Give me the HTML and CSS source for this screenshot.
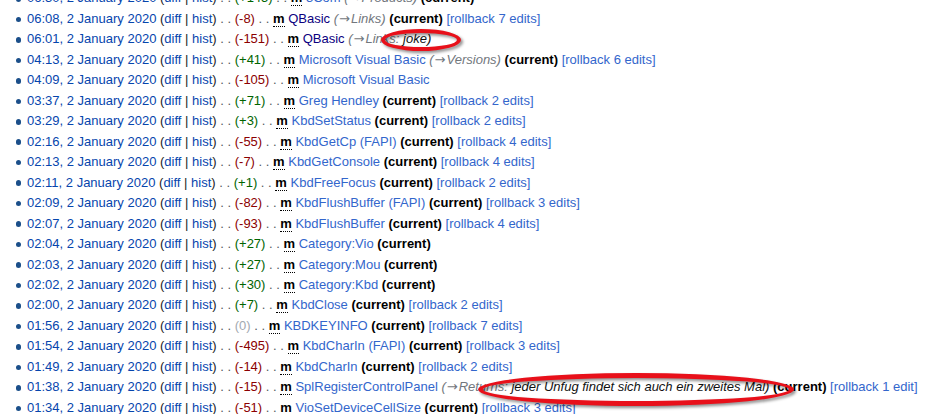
FILE: index.html
```html
<!DOCTYPE html>
<html lang="en">
<head>
    <meta charset="UTF-8">
    <meta name="viewport" content="width=device-width, initial-scale=1.0">
    <title>User contributions</title>

    <link rel="stylesheet" href="styles.css">
</head>
<body>
    <ul class="contribs">
        <li><a class="date" href="#">06:30, 2 January 2020</a> (<a href="#">diff</a> | <a href="#">hist</a>) <span class="sep">. .</span> <span class="size plus">(+145)</span> <span class="sep">. .</span> <abbr class="minor" title="minor edit">m</abbr> <a class="page" href="#">3Com</a> <span class="comment">(<span class="arrow">→</span>Products)</span> <b>(current)</b></li>
        <li><a class="date" href="#">06:08, 2 January 2020</a> (<a href="#">diff</a> | <a href="#">hist</a>) <span class="sep">. .</span> <span class="size minus">(-8)</span> <span class="sep">. .</span> <abbr class="minor" title="minor edit">m</abbr> <a class="page visited" href="#">QBasic</a> <span class="comment">(<span class="arrow">→</span>Links)</span> <b>(current)</b> <span class="rollback">[rollback 7 edits]</span></li>
        <li><a class="date" href="#">06:01, 2 January 2020</a> (<a href="#">diff</a> | <a href="#">hist</a>) <span class="sep">. .</span> <span class="size minus">(-151)</span> <span class="sep">. .</span> <abbr class="minor" title="minor edit">m</abbr> <a class="page visited" href="#">QBasic</a> <span class="comment">(<span class="arrow">→</span>Links: <span class="marked">joke)</span></span></li>
        <li><a class="date" href="#">04:13, 2 January 2020</a> (<a href="#">diff</a> | <a href="#">hist</a>) <span class="sep">. .</span> <span class="size plus">(+41)</span> <span class="sep">. .</span> <abbr class="minor" title="minor edit">m</abbr> <a class="page" href="#">Microsoft Visual Basic</a> <span class="comment">(<span class="arrow">→</span>Versions)</span> <b>(current)</b> <span class="rollback">[rollback 6 edits]</span></li>
        <li><a class="date" href="#">04:09, 2 January 2020</a> (<a href="#">diff</a> | <a href="#">hist</a>) <span class="sep">. .</span> <span class="size minus">(-105)</span> <span class="sep">. .</span> <abbr class="minor" title="minor edit">m</abbr> <a class="page" href="#">Microsoft Visual Basic</a></li>
        <li><a class="date" href="#">03:37, 2 January 2020</a> (<a href="#">diff</a> | <a href="#">hist</a>) <span class="sep">. .</span> <span class="size plus">(+71)</span> <span class="sep">. .</span> <abbr class="minor" title="minor edit">m</abbr> <a class="page" href="#">Greg Hendley</a> <b>(current)</b> <span class="rollback">[rollback 2 edits]</span></li>
        <li><a class="date" href="#">03:29, 2 January 2020</a> (<a href="#">diff</a> | <a href="#">hist</a>) <span class="sep">. .</span> <span class="size plus">(+3)</span> <span class="sep">. .</span> <abbr class="minor" title="minor edit">m</abbr> <a class="page" href="#">KbdSetStatus</a> <b>(current)</b> <span class="rollback">[rollback 2 edits]</span></li>
        <li><a class="date" href="#">02:16, 2 January 2020</a> (<a href="#">diff</a> | <a href="#">hist</a>) <span class="sep">. .</span> <span class="size minus">(-55)</span> <span class="sep">. .</span> <abbr class="minor" title="minor edit">m</abbr> <a class="page" href="#">KbdGetCp (FAPI)</a> <b>(current)</b> <span class="rollback">[rollback 4 edits]</span></li>
        <li><a class="date" href="#">02:13, 2 January 2020</a> (<a href="#">diff</a> | <a href="#">hist</a>) <span class="sep">. .</span> <span class="size minus">(-7)</span> <span class="sep">. .</span> <abbr class="minor" title="minor edit">m</abbr> <a class="page" href="#">KbdGetConsole</a> <b>(current)</b> <span class="rollback">[rollback 4 edits]</span></li>
        <li><a class="date" href="#">02:11, 2 January 2020</a> (<a href="#">diff</a> | <a href="#">hist</a>) <span class="sep">. .</span> <span class="size plus">(+1)</span> <span class="sep">. .</span> <abbr class="minor" title="minor edit">m</abbr> <a class="page" href="#">KbdFreeFocus</a> <b>(current)</b> <span class="rollback">[rollback 2 edits]</span></li>
        <li><a class="date" href="#">02:09, 2 January 2020</a> (<a href="#">diff</a> | <a href="#">hist</a>) <span class="sep">. .</span> <span class="size minus">(-82)</span> <span class="sep">. .</span> <abbr class="minor" title="minor edit">m</abbr> <a class="page" href="#">KbdFlushBuffer (FAPI)</a> <b>(current)</b> <span class="rollback">[rollback 3 edits]</span></li>
        <li><a class="date" href="#">02:07, 2 January 2020</a> (<a href="#">diff</a> | <a href="#">hist</a>) <span class="sep">. .</span> <span class="size minus">(-93)</span> <span class="sep">. .</span> <abbr class="minor" title="minor edit">m</abbr> <a class="page" href="#">KbdFlushBuffer</a> <b>(current)</b> <span class="rollback">[rollback 4 edits]</span></li>
        <li><a class="date" href="#">02:04, 2 January 2020</a> (<a href="#">diff</a> | <a href="#">hist</a>) <span class="sep">. .</span> <span class="size plus">(+27)</span> <span class="sep">. .</span> <abbr class="minor" title="minor edit">m</abbr> <a class="page" href="#">Category:Vio</a> <b>(current)</b></li>
        <li><a class="date" href="#">02:03, 2 January 2020</a> (<a href="#">diff</a> | <a href="#">hist</a>) <span class="sep">. .</span> <span class="size plus">(+27)</span> <span class="sep">. .</span> <abbr class="minor" title="minor edit">m</abbr> <a class="page" href="#">Category:Mou</a> <b>(current)</b></li>
        <li><a class="date" href="#">02:02, 2 January 2020</a> (<a href="#">diff</a> | <a href="#">hist</a>) <span class="sep">. .</span> <span class="size plus">(+30)</span> <span class="sep">. .</span> <abbr class="minor" title="minor edit">m</abbr> <a class="page" href="#">Category:Kbd</a> <b>(current)</b></li>
        <li><a class="date" href="#">02:00, 2 January 2020</a> (<a href="#">diff</a> | <a href="#">hist</a>) <span class="sep">. .</span> <span class="size plus">(+7)</span> <span class="sep">. .</span> <abbr class="minor" title="minor edit">m</abbr> <a class="page" href="#">KbdClose</a> <b>(current)</b> <span class="rollback">[rollback 2 edits]</span></li>
        <li><a class="date" href="#">01:56, 2 January 2020</a> (<a href="#">diff</a> | <a href="#">hist</a>) <span class="sep">. .</span> <span class="size zero">(0)</span> <span class="sep">. .</span> <abbr class="minor" title="minor edit">m</abbr> <a class="page" href="#">KBDKEYINFO</a> <b>(current)</b> <span class="rollback">[rollback 7 edits]</span></li>
        <li><a class="date" href="#">01:54, 2 January 2020</a> (<a href="#">diff</a> | <a href="#">hist</a>) <span class="sep">. .</span> <span class="size minus">(-495)</span> <span class="sep">. .</span> <abbr class="minor" title="minor edit">m</abbr> <a class="page" href="#">KbdCharIn (FAPI)</a> <b>(current)</b> <span class="rollback">[rollback 3 edits]</span></li>
        <li><a class="date" href="#">01:49, 2 January 2020</a> (<a href="#">diff</a> | <a href="#">hist</a>) <span class="sep">. .</span> <span class="size minus">(-14)</span> <span class="sep">. .</span> <abbr class="minor" title="minor edit">m</abbr> <a class="page" href="#">KbdCharIn</a> <b>(current)</b> <span class="rollback">[rollback 2 edits]</span></li>
        <li><a class="date" href="#">01:38, 2 January 2020</a> (<a href="#">diff</a> | <a href="#">hist</a>) <span class="sep">. .</span> <span class="size minus">(-15)</span> <span class="sep">. .</span> <abbr class="minor" title="minor edit">m</abbr> <a class="page" href="#">SplRegisterControlPanel</a> <span class="comment">(<span class="arrow">→</span>Returns: <span class="marked">jeder Unfug findet sich auch ein zweites Mal)</span></span> <b>(current)</b> <span class="rollback">[rollback 1 edit]</span></li>
        <li><a class="date" href="#">01:34, 2 January 2020</a> (<a href="#">diff</a> | <a href="#">hist</a>) <span class="sep">. .</span> <span class="size minus">(-51)</span> <span class="sep">. .</span> <abbr class="minor" title="minor edit">m</abbr> <a class="page" href="#">VioSetDeviceCellSize</a> <b>(current)</b> <span class="rollback">[rollback 3 edits]</span></li>
    </ul>

    <!-- red marker rings drawn over the screenshot -->
    <div class="ring ring-joke"></div>
    <div class="ring ring-unfug"></div>
</body>
</html>
```

FILE: styles.css
```css
*{
    font-family: "Liberation Sans", Arial, sans-serif;
}

body {
    margin: 0;
    background-color: #fff;
    color: #222;
    font-size: 13px;
    position: relative;
    height: 414px;
    overflow: hidden;
}

a {
    text-decoration: none;
    color: #0645ad;
}

.contribs {
    list-style: none;
    margin: -11.6px 0 0 0;
    padding: 0 0 0 27px;
}

.contribs li {
    position: relative;
    line-height: 20.47px;
    white-space: nowrap;
}

.contribs li::before {
    content: "";
    position: absolute;
    left: -11.5px;
    top: 7.8px;
    width: 5.5px;
    height: 5.5px;
    border-radius: 50%;
    background-color: #1b4f8a;
}

.sep {
    color: #54595d;
}

.size.plus {
    color: #006400;
}

.size.minus {
    color: #8b0000;
}

.size.zero {
    color: #a2a9b1;
}

.minor {
    font-weight: bold;
    color: #000;
    text-decoration: none;
    border-bottom: 1px dotted #000;
}

.page {
    color: #3366cc;
}

.page.visited {
    color: #0b0080;
}

.comment {
    color: #72777d;
    font-style: italic;
}

.comment .arrow {
    font-family: "DejaVu Sans", sans-serif;
    font-style: normal;
    font-size: 13px;
    padding: 0 1px;
}

.comment .marked {
    color: #111;
}

b {
    color: #000;
}

.rollback {
    color: #3366cc;
}

.ring {
    position: absolute;
    border: 4px solid #e8101a;
    border-radius: 50%;
    box-sizing: border-box;
    filter: drop-shadow(2px 2px 1.5px rgba(0, 0, 0, 0.45));
}

.ring-joke {
    left: 381px;
    top: 29px;
    width: 80px;
    height: 22px;
}

.ring-unfug {
    left: 478px;
    top: 373px;
    width: 316px;
    height: 33px;
    border-width: 5px;
}
```
